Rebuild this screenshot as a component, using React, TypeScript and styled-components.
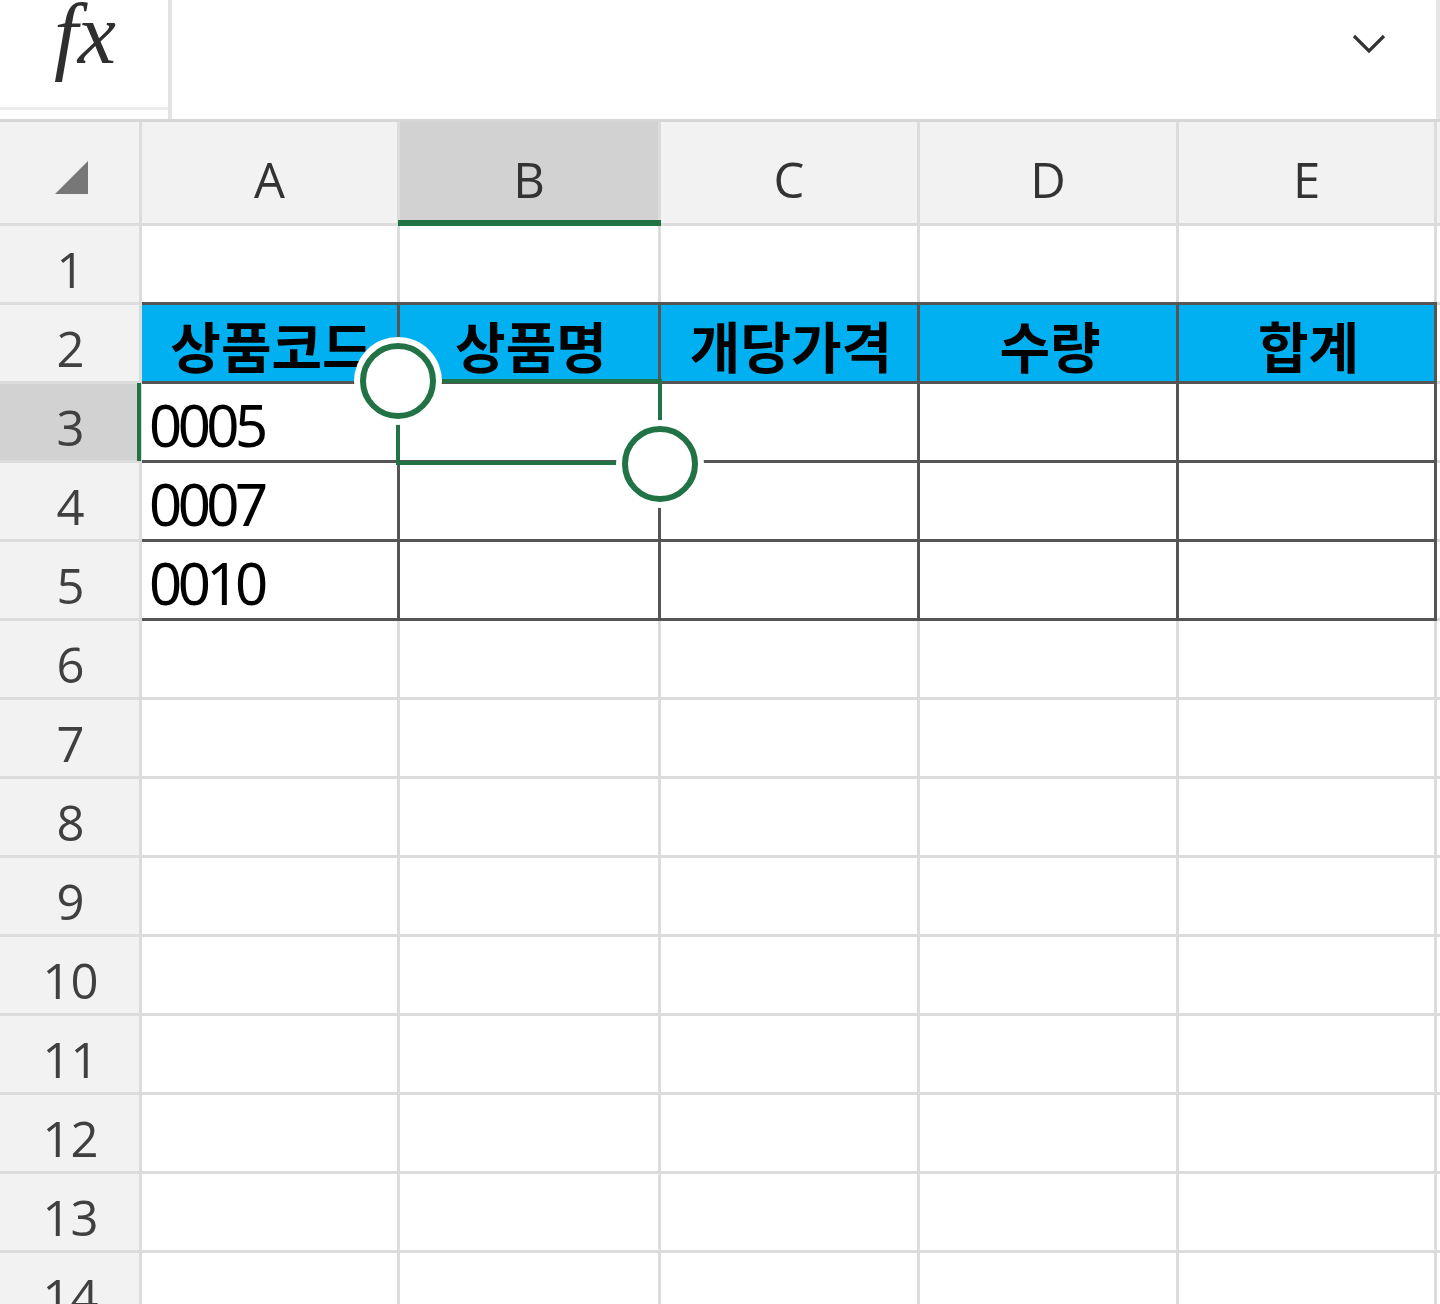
import React from "react";
import styled, { createGlobalStyle, css } from "styled-components";

const Global = createGlobalStyle`
  html, body { margin: 0; padding: 0; background: #ffffff; }
  #root { width: 1440px; height: 1304px; overflow: hidden; }
`;

const Page = styled.div`
  width: 1440px;
  height: 1304px;
  overflow: hidden;
  background: #ffffff;
  font-family: "Open Sans", "Noto Sans", "Noto Sans CJK KR", sans-serif;
`;

const TopBar = styled.div`
  display: flex;
  height: 119px;
  border-bottom: 3px solid #d6d6d6;
  background: #ffffff;
`;

const FxBox = styled.div`
  width: 168px;
  height: 110px;
  border-bottom: 3px solid #ececec;
  display: flex;
  align-items: flex-start;
  justify-content: center;
  box-sizing: border-box;
`;

const FxText = styled.span`
  font-family: "Liberation Serif", "DejaVu Serif", serif;
  font-style: italic;
  font-size: 86px;
  line-height: 1.15;
  color: #2f2f2f;
  margin-left: 2px;
  margin-top: -15px;
`;

const Divider = styled.div`
  width: 4px;
  background: #e3e3e3;
`;

const FormulaInput = styled.div`
  flex: 1;
  display: flex;
  justify-content: flex-end;
  align-items: flex-start;
  padding: 32px 48px 0 0;
  border-right: 4px solid #e6e6e6;
`;

const Wrap = styled.div`
  position: relative;
`;

const Grid = styled.div`
  display: grid;
  grid-template-columns: 139px 255px 258px 256px 256px 255px 1fr;
  grid-template-rows: 101px repeat(14, 76px);
  gap: 3px;
  background: #dcdcdc;
`;

const Corner = styled.div`
  background: #f2f2f2;
  position: relative;
`;

const CornerTri = styled.svg`
  position: absolute;
  left: 55px;
  top: 39px;
`;

const headText = css`
  font-family: "Open Sans", "Noto Sans", sans-serif;
  font-size: 49px;
  color: #333333;
  display: flex;
  justify-content: center;
  position: relative;
`;

const ColHeader = styled.div<{ $active?: boolean }>`
  ${headText};
  align-items: center;
  padding-top: 12px;
  box-sizing: border-box;
  background: ${(p) => (p.$active ? "#d2d2d2" : "#f2f2f2")};
  ${(p) =>
    p.$active &&
    css`
      &::after {
        content: "";
        position: absolute;
        left: -2px;
        right: -3px;
        bottom: -3px;
        height: 6px;
        background: #217346;
      }
    `}
`;

const RowHeader = styled.div<{ $active?: boolean }>`
  ${headText};
  align-items: center;
  padding-top: 10px;
  padding-left: 2px;
  box-sizing: border-box;
  color: #404040;
  background: ${(p) => (p.$active ? "#d2d2d2" : "#f2f2f2")};
  ${(p) =>
    p.$active &&
    css`
      &::after {
        content: "";
        position: absolute;
        right: -2px;
        width: 4px;
        top: -1px;
        bottom: -1px;
        background: #217346;
      }
    `}
`;

const DARK = "#555555";

const Cell = styled.div<{ $table?: boolean; $head?: boolean; $top?: boolean }>`
  background: ${(p) => (p.$head ? "#00b0f0" : "#ffffff")};
  display: flex;
  align-items: center;
  ${(p) =>
    p.$table &&
    css`
      box-shadow: 3px 0 0 ${DARK}, 0 3px 0 ${DARK}, 3px 3px 0 ${DARK}
        ${p.$top ? `, 0 -3px 0 ${DARK}, 3px -3px 0 ${DARK}` : ""};
    `}
`;

const HeadLabel = styled.span`
  flex: 1;
  text-align: center;
  font-family: "Noto Sans CJK KR", "Noto Sans", sans-serif;
  font-weight: 700;
  font-size: 55px;
  line-height: 1;
  color: #000000;
  white-space: nowrap;
  margin-left: 4px;
  margin-top: 2px;
`;

const DataText = styled.span`
  font-family: "Noto Sans", "Open Sans", sans-serif;
  font-size: 58px;
  line-height: 1;
  color: #000000;
  padding-left: 7px;
  margin-top: 6px;
  letter-spacing: -4.5px;
`;

const Selection = styled.div`
  position: absolute;
  left: 396px;
  top: 257px;
  width: 266px;
  height: 86px;
  border: 4px solid #217346;
  box-sizing: border-box;
  pointer-events: none;
`;

const Handle = styled.div<{ $x: number; $y: number }>`
  position: absolute;
  left: ${(p) => p.$x - 38}px;
  top: ${(p) => p.$y - 38}px;
  width: 76px;
  height: 76px;
  border-radius: 50%;
  border: 6px solid #217346;
  background: #ffffff;
  box-sizing: border-box;
  box-shadow: 0 0 0 6px #ffffff;
`;

const cols = ["A", "B", "C", "D", "E"];
const heads = ["상품코드", "상품명", "개당가격", "수량", "합계"];
const data: Record<number, string> = { 3: "0005", 4: "0007", 5: "0010" };

export default function App() {
  const rows = Array.from({ length: 14 }, (_, i) => i + 1);
  return (
    <Page>
      <Global />
      <TopBar>
        <FxBox>
          <FxText>fx</FxText>
        </FxBox>
        <Divider />
        <FormulaInput>
          <svg width="36" height="22" viewBox="0 0 36 22">
            <polyline points="2,4 17,19 32,4" fill="none" stroke="#333" strokeWidth="3.2" />
          </svg>
        </FormulaInput>
      </TopBar>
      <Wrap>
        <Grid>
          <Corner>
            <CornerTri width="34" height="34" viewBox="0 0 34 34">
              <polygon points="0,33 33,33 33,0" fill="#777777" />
            </CornerTri>
          </Corner>
          {cols.map((c) => (
            <ColHeader key={c} $active={c === "B"}>
              {c}
            </ColHeader>
          ))}
          <ColHeader />
          {rows.map((r) => (
            <React.Fragment key={r}>
              <RowHeader $active={r === 3}>{r}</RowHeader>
              {cols.map((c, ci) => {
                const inTable = r >= 2 && r <= 5;
                return (
                  <Cell key={c} $table={inTable} $head={r === 2} $top={r === 2}>
                    {r === 2 && <HeadLabel>{heads[ci]}</HeadLabel>}
                    {ci === 0 && data[r] && <DataText>{data[r]}</DataText>}
                  </Cell>
                );
              })}
              <Cell />
            </React.Fragment>
          ))}
        </Grid>
        <Selection />
        <Handle $x={398} $y={259} />
        <Handle $x={660} $y={342} />
      </Wrap>
    </Page>
  );
}
